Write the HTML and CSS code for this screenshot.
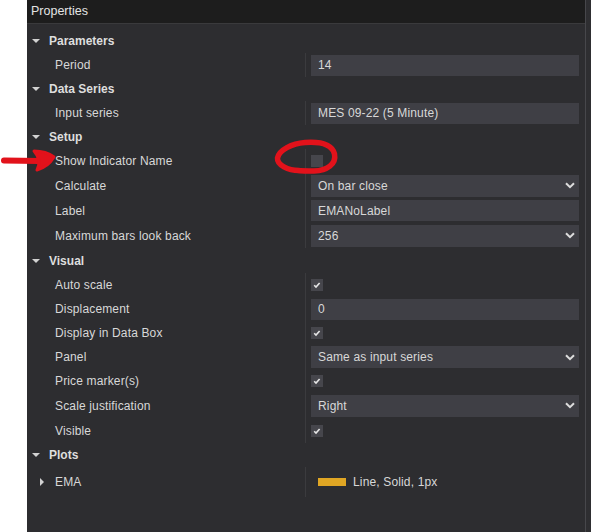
FILE: index.html
```html
<!DOCTYPE html>
<html>
<head>
<meta charset="utf-8">
<link rel="stylesheet" href="styles.css">
</head>
<body>
<div class="page">
  <div class="strip"></div>
  <div class="panel">
    <div class="title">Properties</div>
    <div class="grid">
      <div class="cat h24"><span class="tri-down"></span>Parameters</div>
      <div class="row h24"><div class="label">Period</div><div class="value"><div class="box">14</div></div></div>
      <div class="cat h24"><span class="tri-down"></span>Data Series</div>
      <div class="row h24"><div class="label">Input series</div><div class="value"><div class="box">MES 09-22 (5 Minute)</div></div></div>
      <div class="cat h24"><span class="tri-down"></span>Setup</div>
      <div class="row h24"><div class="label">Show Indicator Name</div><div class="value"><span class="chk"></span></div></div>
      <div class="row h25"><div class="label">Calculate</div><div class="value"><div class="box drop"><span>On bar close</span><svg class="chev" width="10" height="7" viewBox="0 0 10 7"><path d="M1 1.2 L5 5.2 L9 1.2" fill="none" stroke="#dcdcdc" stroke-width="2"/></svg></div></div></div>
      <div class="row h25"><div class="label">Label</div><div class="value"><div class="box">EMANoLabel</div></div></div>
      <div class="row h25"><div class="label">Maximum bars look back</div><div class="value"><div class="box drop"><span>256</span><svg class="chev" width="10" height="7" viewBox="0 0 10 7"><path d="M1 1.2 L5 5.2 L9 1.2" fill="none" stroke="#dcdcdc" stroke-width="2"/></svg></div></div></div>
      <div class="cat h25"><span class="tri-down"></span>Visual</div>
      <div class="row h24"><div class="label">Auto scale</div><div class="value"><span class="chk"><svg width="12" height="12" viewBox="0 0 12 12"><path d="M3.2 6.2 L5 8 L8.6 4" fill="none" stroke="#e6e6e6" stroke-width="1.6"/></svg></span></div></div>
      <div class="row h24"><div class="label">Displacement</div><div class="value"><div class="box">0</div></div></div>
      <div class="row h24"><div class="label">Display in Data Box</div><div class="value"><span class="chk"><svg width="12" height="12" viewBox="0 0 12 12"><path d="M3.2 6.2 L5 8 L8.6 4" fill="none" stroke="#e6e6e6" stroke-width="1.6"/></svg></span></div></div>
      <div class="row h24"><div class="label">Panel</div><div class="value"><div class="box drop"><span>Same as input series</span><svg class="chev" width="10" height="7" viewBox="0 0 10 7"><path d="M1 1.2 L5 5.2 L9 1.2" fill="none" stroke="#dcdcdc" stroke-width="2"/></svg></div></div></div>
      <div class="row h24"><div class="label">Price marker(s)</div><div class="value"><span class="chk"><svg width="12" height="12" viewBox="0 0 12 12"><path d="M3.2 6.2 L5 8 L8.6 4" fill="none" stroke="#e6e6e6" stroke-width="1.6"/></svg></span></div></div>
      <div class="row h25"><div class="label">Scale justification</div><div class="value"><div class="box drop"><span>Right</span><svg class="chev" width="10" height="7" viewBox="0 0 10 7"><path d="M1 1.2 L5 5.2 L9 1.2" fill="none" stroke="#dcdcdc" stroke-width="2"/></svg></div></div></div>
      <div class="row h25"><div class="label">Visible</div><div class="value"><span class="chk"><svg width="12" height="12" viewBox="0 0 12 12"><path d="M3.2 6.2 L5 8 L8.6 4" fill="none" stroke="#e6e6e6" stroke-width="1.6"/></svg></span></div></div>
      <div class="cat h24"><span class="tri-down"></span>Plots</div>
      <div class="row h30"><div class="label sub"><span class="tri-right"></span>EMA</div><div class="value plot"><span class="swatch"></span><span>Line, Solid, 1px</span></div></div>
    </div>
  </div>
  <div class="edge"></div>
</div>
<svg class="marks" width="591" height="532" viewBox="0 0 591 532">
  <path d="M4 160.5 L39 161" fill="none" stroke="#e2121b" stroke-width="6" stroke-linecap="round"/>
  <path d="M34 151 Q46 151 54 157 Q48 167 37 170 Q42 160 34 151 Z" fill="#e2121b" stroke="#e2121b" stroke-width="3" stroke-linejoin="round"/>
  <path d="M299 170.5 C288 170.5 277 165 277.5 158 C279 150 292 143.5 305 142.5 C320 141.5 332 144 334.5 154 C336.5 164 327 170.5 314 171 C308 171 303 171 297 170.5" fill="none" stroke="#e2121b" stroke-width="5.5" stroke-linecap="round"/>
</svg>
</body>
</html>
```
FILE: styles.css
```css
html, body {
  margin: 0;
  padding: 0;
}
body {
  width: 591px;
  height: 532px;
  overflow: hidden;
  background: #2d2d30;
  font-family: "Liberation Sans", Arial, sans-serif;
  font-size: 12px;
  letter-spacing: 0.15px;
  color: #d8d8d8;
  position: relative;
}
.page {
  display: flex;
  height: 532px;
}
.strip {
  width: 27px;
  background: #ffffff;
  flex: none;
}
.panel {
  width: 558px;
  flex: none;
  background: #2d2d30;
  border-right: 1px solid #47474b;
}
.edge {
  flex: 1;
  background: #2e2e31;
}
.title {
  height: 23px;
  line-height: 22px;
  padding-left: 4px;
  background: #1d1d1d;
  border-bottom: 1px solid #3a3a3c;
  color: #e4e4e4;
  font-size: 12.5px;
  letter-spacing: 0;
}
.grid {
  padding-top: 5px;
}
.h24 { height: 24px; }
.h25 { height: 25px; }
.h30 { height: 30px; }
.cat {
  display: flex;
  align-items: center;
  font-weight: bold;
  color: #dedede;
  padding-left: 5px;
  letter-spacing: 0;
}
.tri-down {
  width: 0;
  height: 0;
  border-left: 4px solid transparent;
  border-right: 4px solid transparent;
  border-top: 4px solid #d2d2d2;
  margin-right: 9px;
}
.tri-right {
  width: 0;
  height: 0;
  border-top: 4px solid transparent;
  border-bottom: 4px solid transparent;
  border-left: 4px solid #d2d2d2;
  margin-left: -15px;
  margin-right: 11px;
}
.row {
  display: grid;
  grid-template-columns: 278px 1fr;
}
.label {
  display: flex;
  align-items: center;
  padding-left: 28px;
}
.value {
  display: flex;
  align-items: center;
  border-left: 1px solid #3b3b3e;
  padding-left: 5px;
  padding-right: 6px;
}
.box {
  flex: 1;
  height: 21px;
  background: #3f3f45;
  display: flex;
  align-items: center;
  padding-left: 7px;
  color: #d8d8d8;
  box-sizing: border-box;
}
.box.drop {
  height: 22px;
  justify-content: space-between;
  padding-right: 4px;
}
.chev {
  display: block;
}
.chk {
  width: 12px;
  height: 12px;
  background: #46464c;
  display: block;
}
.chk svg {
  display: block;
}
.plot {
  padding-left: 12px;
}
.swatch {
  width: 28px;
  height: 8px;
  background: #e0a624;
  margin-right: 7px;
}
.marks {
  position: absolute;
  left: 0;
  top: 0;
  pointer-events: none;
}
```
